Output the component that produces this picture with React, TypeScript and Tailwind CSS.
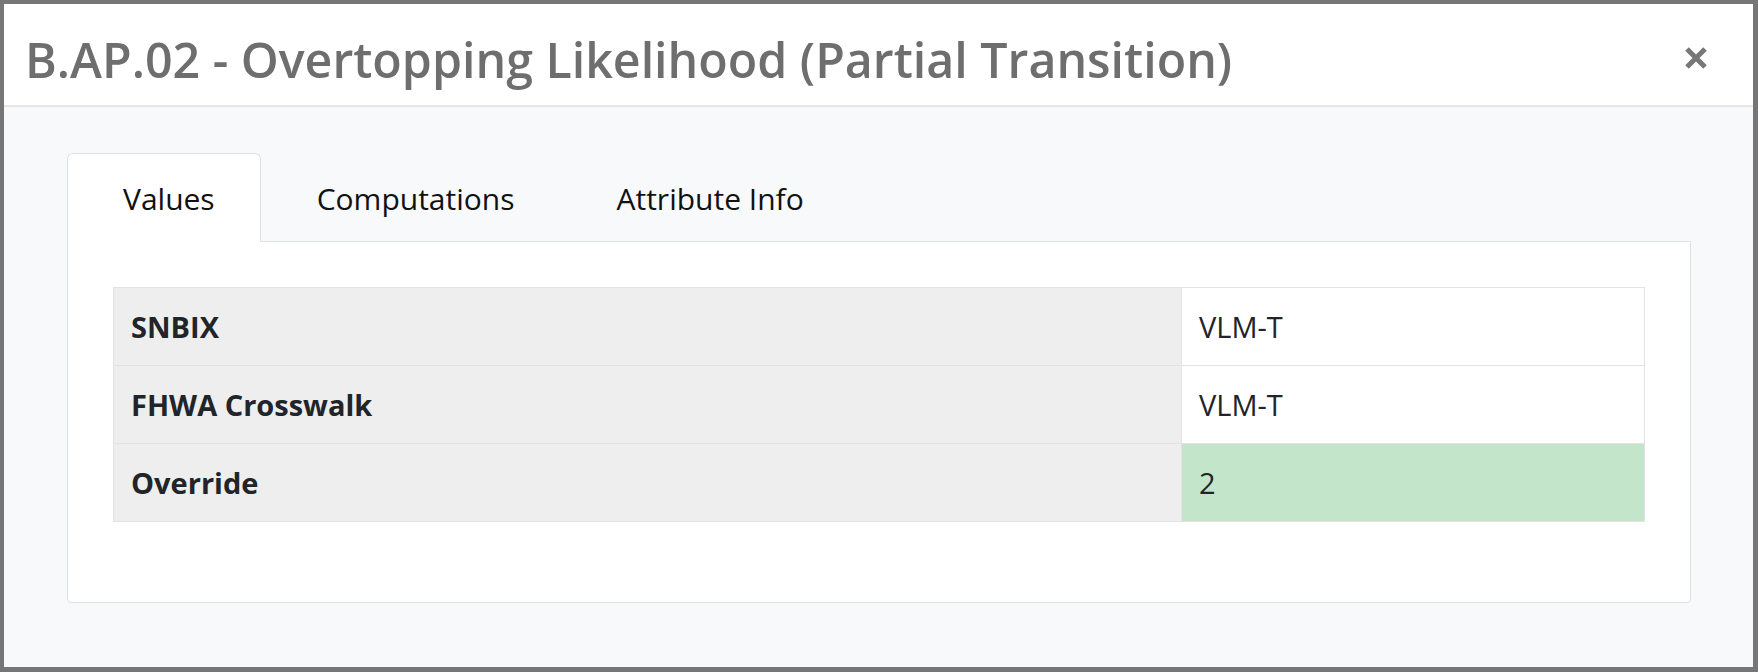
import { useState } from 'react';

const rows = [
  { label: 'SNBIX', value: 'VLM-T', highlight: false },
  { label: 'FHWA Crosswalk', value: 'VLM-T', highlight: false },
  { label: 'Override', value: '2', highlight: true },
];

const tabs = ['Values', 'Computations', 'Attribute Info'];

export default function App() {
  const [active, setActive] = useState('Values');

  return (
    <div
      className="w-[1758px] h-[672px] flex flex-col bg-white border-t-4 border-l-4 border-r-[5px] border-b-[5px] border-[#767676] overflow-hidden"
      style={{ fontFamily: '"Open Sans", "Liberation Sans", sans-serif' }}
    >
      {/* Header */}
      <div className="h-[103px] shrink-0 flex items-center justify-between pl-[21px] pr-[45px] border-b-2 border-[#e6e6e6]">
        <h1 className="text-[48.3px] leading-none font-semibold text-[#6e6e6e] mt-[9px]">
          B.AP.02 - Overtopping Likelihood (Partial Transition)
        </h1>
        <button type="button" className="w-[24px] h-[24px] flex items-center justify-center mt-[7px]">
          <svg width="24" height="24" viewBox="0 0 24 24">
            <path d="M3 3 L21 21 M21 3 L3 21" stroke="#777777" strokeWidth="5" strokeLinecap="butt" />
          </svg>
        </button>
      </div>

      {/* Body */}
      <div className="flex-1 bg-[#f8f9fa] pt-[46px] pl-[63px] pr-[62px] pb-[64px] flex flex-col">
        <div className="flex">
          {tabs.map((tab) => (
            <button
              key={tab}
              type="button"
              onClick={() => setActive(tab)}
              className={
                active === tab
                  ? 'h-[89px] -mb-px pl-[55px] pr-[45px] text-[30px] text-[#111] bg-white border border-b-0 border-[#dee2e6] rounded-t-[6px] relative z-10'
                  : 'h-[89px] -mb-px pl-[55px] pr-[45px] text-[30px] text-[#111] border border-b-0 border-transparent'
              }
            >
              {tab}
            </button>
          ))}
        </div>

        <div className="flex-1 bg-white border border-[#dee2e6] rounded-b-[4px] pt-[45px] px-[45px] pb-[80px]">
          <table className="w-full border-collapse">
            <tbody>
              {rows.map((row) => (
                <tr key={row.label}>
                  <td className="w-[1068px] h-[78px] bg-[#eeeeee] border border-[#e3e3e3] px-[17px] text-[29px] leading-[43px] font-bold text-[#212529]">
                    {row.label}
                  </td>
                  <td
                    className={
                      row.highlight
                        ? 'h-[78px] bg-[#c3e6cb] border border-[#e3e3e3] px-[17px] text-[29px] leading-[43px] text-[#212529]'
                        : 'h-[78px] bg-white border border-[#e3e3e3] px-[17px] text-[29px] leading-[43px] text-[#212529]'
                    }
                  >
                    {row.value}
                  </td>
                </tr>
              ))}
            </tbody>
          </table>
        </div>
      </div>
    </div>
  );
}
